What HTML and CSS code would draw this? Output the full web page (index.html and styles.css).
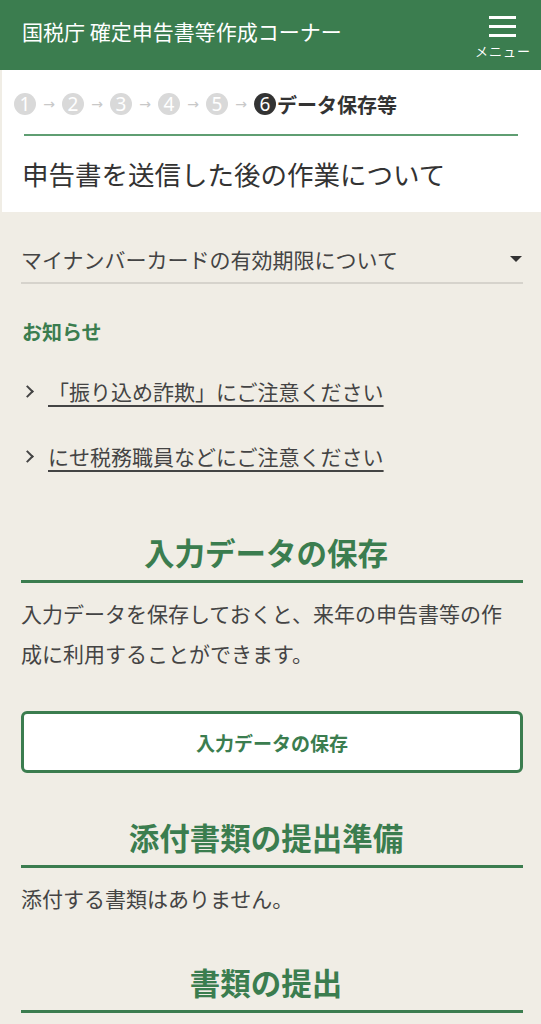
FILE: index.html
```html
<!DOCTYPE html>
<html lang="ja">
<head>
    <meta charset="UTF-8">
    <meta name="viewport" content="width=device-width, initial-scale=1.0">
    <title>確定申告書等作成コーナー</title>
    <link rel="stylesheet" href="styles.css">
</head>
<body>

    <header class="header">
        <div class="header-title">国税庁 確定申告書等作成コーナー</div>
        <div class="menu">
            <span class="menu-bars"><i></i><i></i><i></i></span>
            <span class="menu-label">メニュー</span>
        </div>
    </header>

    <!-- ステップ表示とページタイトル -->
    <div class="panel">
        <div class="steps">
            <span class="step">1</span><span class="arrow">→</span>
            <span class="step">2</span><span class="arrow">→</span>
            <span class="step">3</span><span class="arrow">→</span>
            <span class="step">4</span><span class="arrow">→</span>
            <span class="step">5</span><span class="arrow">→</span>
            <span class="step current">6</span><span class="step-name">データ保存等</span>
        </div>
        <div class="panel-line"></div>
        <h1 class="page-title">申告書を送信した後の作業について</h1>
    </div>

    <main class="content">
        <div class="dropdown">
            <span>マイナンバーカードの有効期限について</span>
            <span class="caret"></span>
        </div>

        <h3 class="notice-title">お知らせ</h3>
        <ul class="notice-list">
            <li><span class="chevron"></span><a href="#">「振り込め詐欺」にご注意ください</a></li>
            <li><span class="chevron"></span><a href="#">にせ税務職員などにご注意ください</a></li>
        </ul>

        <h2 class="section-title first">入力データの保存</h2>
        <p class="text">入力データを保存しておくと、来年の申告書等の作成に利用することができます。</p>
        <button class="save-button">入力データの保存</button>

        <h2 class="section-title">添付書類の提出準備</h2>
        <p class="text">添付する書類はありません。</p>

        <h2 class="section-title">書類の提出</h2>
    </main>

</body>
</html>
```

FILE: styles.css
```css
body { margin: 0; background: #f0ede5; font-family: "Noto Sans CJK JP", "Noto Sans", sans-serif; color: #444; }
.header { height: 70px; background: #3b7d4f; display: flex; justify-content: space-between; align-items: center; padding: 0 10px 0 22px; }
.header-title { color: #fff; font-size: 21px; line-height: 1; margin-top: -7px; }
.menu { display: flex; flex-direction: column; align-items: center; color: #fff; margin-top: 2px; }
.menu-bars { display: flex; flex-direction: column; gap: 6px; width: 27px; }
.menu-bars i { display: block; height: 3px; background: #fff; }
.menu-label { font-size: 13px; line-height: 1; margin-top: 7px; letter-spacing: 1px; }

.panel { background: #fff; border-left: 2px solid #f0ede5; padding: 23px 0 18px; }
.steps { display: flex; align-items: center; height: 22px; padding-left: 12px; }
.step { width: 22px; height: 22px; border-radius: 50%; background: #d9d9d9; color: #fff; font-size: 19px; line-height: 22px; text-align: center; font-family: "Noto Sans", sans-serif; }
.step.current { background: #333; }
.arrow { color: #c8c8c8; font-size: 14px; width: 26px; text-align: center; font-family: "DejaVu Sans", sans-serif; }
.step-name { font-size: 20px; font-weight: bold; color: #333; margin-left: 1px; }
.panel-line { height: 2px; background: #5f9e72; margin: 19px 23px 0 22px; }
.page-title { font-size: 26.5px; font-weight: normal; color: #333; line-height: 40px; margin: 18px 0 0 20px; }

.content { padding: 0 18px 0 21px; }
.dropdown { display: flex; justify-content: space-between; align-items: center; font-size: 21px; line-height: 30px; padding-bottom: 8px; border-bottom: 2px solid #d6d3cc; margin-top: 32px; }
.caret { width: 0; height: 0; border-left: 6px solid transparent; border-right: 6px solid transparent; border-top: 6px solid #333; margin-right: 1px; }
.notice-title { color: #3b7d4f; font-size: 20px; line-height: 30px; margin: 33px 0 0 1px; }
.notice-list { list-style: none; margin: 29px 0 0; padding: 0; display: flex; flex-direction: column; gap: 35px; }
.notice-list li { display: flex; align-items: center; font-size: 21px; line-height: 30px; }
.chevron { width: 7px; height: 7px; border-top: 2px solid #444; border-right: 2px solid #444; transform: rotate(45deg); margin: 0 16px 0 2px; }
.notice-list a { color: #444; text-decoration: underline; text-decoration-thickness: 2px; text-underline-offset: 5px; }

.section-title { color: #3b7d4f; font-size: 30.5px; font-weight: bold; line-height: 40px; text-align: center; margin: 44px 0 0; padding: 0 12px 8px 0; border-bottom: 3px solid #3b7d4f; }
.section-title.first { margin-top: 61px; }
.text { font-size: 21px; line-height: 40px; margin: 10px 0 0; padding-right: 6px; }
.save-button { display: block; width: 100%; height: 62px; margin-top: 38px; background: #fff; border: 3px solid #3b7d4f; border-radius: 6px; color: #3b7d4f; font-family: inherit; font-size: 19px; font-weight: bold; cursor: pointer; }
```
